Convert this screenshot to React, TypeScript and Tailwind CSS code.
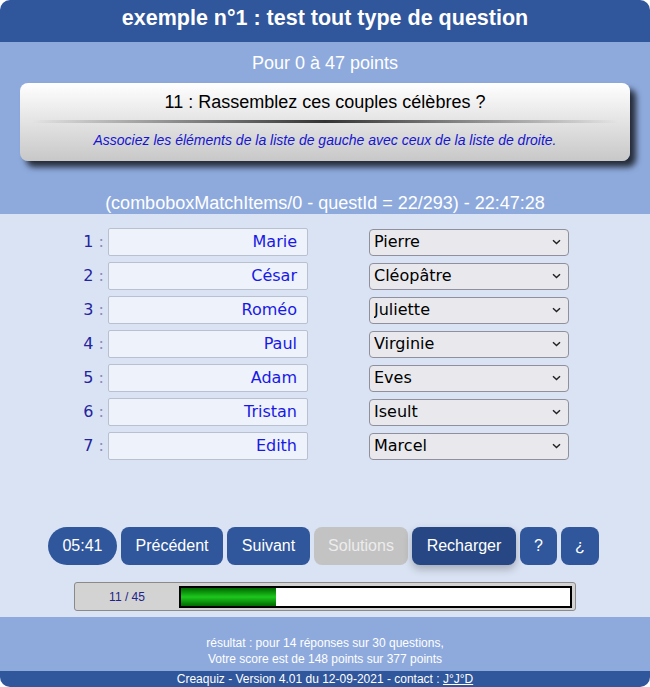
import React from "react";

const pairs = [
  { left: "Marie", right: "Pierre" },
  { left: "César", right: "Cléopâtre" },
  { left: "Roméo", right: "Juliette" },
  { left: "Paul", right: "Virginie" },
  { left: "Adam", right: "Eves" },
  { left: "Tristan", right: "Iseult" },
  { left: "Edith", right: "Marcel" },
];

const options = ["Pierre", "Cléopâtre", "Juliette", "Virginie", "Eves", "Iseult", "Marcel"];

function Chevron() {
  return (
    <svg
      className="pointer-events-none absolute right-[8px] top-1/2 -translate-y-1/2"
      width="9"
      height="6"
      viewBox="0 0 9 6"
    >
      <path d="M1 1.2 L4.5 4.6 L8 1.2" fill="none" stroke="#222" strokeWidth="1.4" />
    </svg>
  );
}

function MatchRow({ n, left, right }: { n: number; left: string; right: string }) {
  return (
    <div className="flex items-center h-[28px] pl-[68px]">
      <div className="w-[40px] text-right pr-[4px] text-[16px] text-[#2424a0] font-['DejaVu_Sans',sans-serif]">
        {n} <span className="text-[#8b8bc0]">:</span>
      </div>
      <div className="w-[200px] h-[28px] bg-[#eef2fb] border border-[#b9c0cf] rounded-[2px] flex items-center justify-end pr-[10px] text-[16px] text-[#1919e6] font-['DejaVu_Sans',sans-serif]">
        {left}
      </div>
      <div className="relative ml-[61px] w-[200px] h-[27px]">
        <select
          defaultValue={right}
          className="appearance-none w-full h-full bg-[#e9e9ed] border border-[#8f8f9d] rounded-[4px] pl-[4px] text-[16px] text-black font-['DejaVu_Sans',sans-serif] outline-none"
        >
          {options.map((o) => (
            <option key={o}>{o}</option>
          ))}
        </select>
        <Chevron />
      </div>
    </div>
  );
}

export default function App() {
  return (
    <div className="w-[650px] h-[687px] bg-white font-['Liberation_Sans',Arial,sans-serif]">
      <div className="h-full rounded-[10px] overflow-hidden flex flex-col">
        {/* header */}
        <div className="h-[42px] bg-[#30569b] flex items-center justify-center text-white text-[21.5px] font-bold pb-[5px]">
          exemple n°1 : test tout type de question
        </div>

        {/* question block */}
        <div className="h-[172px] bg-[#8eaadd] pt-[10px]">
          <div className="h-[22px] leading-[22px] text-center text-white text-[18px]">Pour 0 à 47 points</div>
          <div className="mx-[20px] mt-[9px] h-[78px] rounded-[8px] bg-linear-to-b from-white to-[#c8c8c8] shadow-[6px_6px_6px_rgba(0,0,0,0.75)] pt-[8px]">
            <div className="h-[22px] leading-[22px] text-center text-black text-[18px]">
              11 : Rassemblez ces couples célèbres ?
            </div>
            <div className="mx-[12px] mt-[7px] h-[3px] bg-linear-to-r from-transparent via-[#333] to-transparent" />
            <div className="mt-[9px] h-[16px] leading-[16px] text-center italic text-[14px] text-[#1414d2]">
              Associez les éléments de la liste de gauche avec ceux de la liste de droite.
            </div>
          </div>
          <div className="mt-[32px] h-[21px] leading-[21px] text-center text-white text-[18px]">
            (comboboxMatchItems/0 - questId = 22/293) - 22:47:28
          </div>
        </div>

        {/* answers */}
        <div className="h-[403px] bg-[#dae3f3] pt-[14px]">
          <div className="flex flex-col gap-[6px]">
            {pairs.map((p, i) => (
              <MatchRow key={p.left} n={i + 1} left={p.left} right={p.right} />
            ))}
          </div>

          <div className="mt-[67px] flex justify-center gap-[4px] text-[16px] text-white pr-[3px]">
            <div className="w-[69px] h-[38px] rounded-full bg-[#30569b] flex items-center justify-center">05:41</div>
            <div className="w-[102px] h-[38px] rounded-[8px] bg-[#30569b] flex items-center justify-center">Précédent</div>
            <div className="w-[83px] h-[38px] rounded-[8px] bg-[#30569b] flex items-center justify-center">Suivant</div>
            <div className="w-[94px] h-[38px] rounded-[8px] bg-[#c3c3c3] text-[#ececec] flex items-center justify-center">Solutions</div>
            <div className="w-[104px] h-[38px] rounded-[8px] bg-[#264784] shadow-[0_4px_8px_rgba(0,0,0,0.25)] flex items-center justify-center">Recharger</div>
            <div className="w-[37px] h-[38px] rounded-[8px] bg-[#30569b] flex items-center justify-center">?</div>
            <div className="w-[38px] h-[38px] rounded-[8px] bg-[#30569b] flex items-center justify-center">¿</div>
          </div>

          <div className="mt-[17px] mx-auto w-[502px] h-[29px] bg-[#d3d3d3] border border-[#8a8a8a] rounded-[3px] flex items-center">
            <div className="w-[104px] text-center text-[12px] text-[#22228a]">11 / 45</div>
            <div className="w-[393px] h-[22px] bg-white border-2 border-black p-0">
              <div className="w-[95px] h-full bg-linear-to-b from-[#006a00] via-[#1ec81e] to-[#006a00]" />
            </div>
          </div>
        </div>

        {/* result */}
        <div className="h-[54px] bg-[#8eaadd] flex flex-col justify-end pb-[4px] text-center text-white text-[12px] leading-[16px]">
          <div>résultat : pour 14 réponses sur 30 questions,</div>
          <div>Votre score est de 148 points sur 377 points</div>
        </div>

        {/* footer */}
        <div className="h-[16px] bg-[#30569b] text-center text-white text-[12px] leading-[16px]">
          Creaquiz - Version 4.01 du 12-09-2021 - contact : <span className="underline">J°J°D</span>
        </div>
      </div>
    </div>
  );
}
